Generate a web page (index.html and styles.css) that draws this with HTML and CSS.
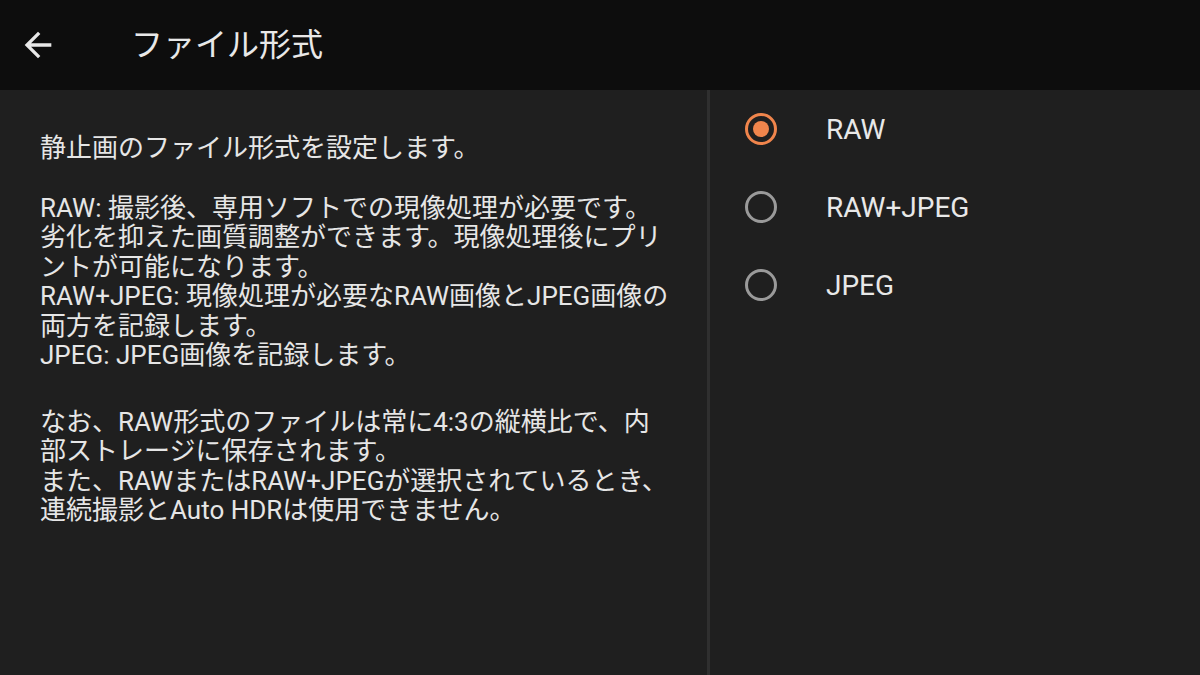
FILE: index.html
```html
<!DOCTYPE html>
<html lang="ja">
<head>
<meta charset="utf-8">
<link rel="stylesheet" href="styles.css">
</head>
<body>
<div class="app">
  <header class="topbar">
    <span class="back">
      <svg viewBox="0 0 24 24" width="40" height="40"><path d="M20 11H7.83l5.59-5.59L12 4l-8 8 8 8 1.41-1.41L7.83 13H20v-2z" fill="#e8e8e8"/></svg>
    </span>
    <h1 class="title">ファイル形式</h1>
  </header>
  <main class="content">
    <section class="desc">
      <p class="para intro">静止画のファイル形式を設定します。</p>
      <p class="para formats">RAW: 撮影後、専用ソフトでの現像処理が必要です。<br>劣化を抑えた画質調整ができます。現像処理後にプリ<br>ントが可能になります。<br>RAW+JPEG: 現像処理が必要なRAW画像とJPEG画像の<br>両方を記録します。<br>JPEG: JPEG画像を記録します。</p>
      <p class="para note">なお、RAW形式のファイルは常に4:3の縦横比で、内<br>部ストレージに保存されます。<br>また、RAWまたはRAW+JPEGが選択されているとき、<br>連続撮影とAuto HDRは使用できません。</p>
    </section>
    <section class="options">
      <div class="option"><span class="radio checked"></span><span class="label">RAW</span></div>
      <div class="option"><span class="radio"></span><span class="label">RAW+JPEG</span></div>
      <div class="option"><span class="radio"></span><span class="label">JPEG</span></div>
    </section>
  </main>
</div>
</body>
</html>
```
FILE: styles.css
```css
html, body {
  margin: 0;
  padding: 0;
  background: #1f1f1f;
}
body {
  font-family: Roboto, "Noto Sans CJK JP", sans-serif;
  color: #e6e6e6;
}
.app {
  width: 1200px;
  height: 675px;
  display: flex;
  flex-direction: column;
  overflow: hidden;
}
.topbar {
  height: 90px;
  flex: 0 0 90px;
  background: #0d0d0d;
  display: flex;
  align-items: center;
  padding-left: 18px;
  box-sizing: border-box;
}
.back {
  width: 40px;
  height: 40px;
  display: flex;
}
.title {
  margin: 0 0 0 73px;
  font-weight: 400;
  font-size: 32px;
  color: #e8e8e8;
  line-height: 1;
}
.content {
  flex: 1;
  display: flex;
}
.desc {
  width: 710px;
  flex: 0 0 710px;
  box-sizing: border-box;
  padding: 44px 0 0 40px;
  border-right: 3px solid #2f2f2f;
}
.para {
  margin: 0;
  font-size: 26px;
  line-height: 29.5px;
  white-space: nowrap;
}
.intro {
  margin-bottom: 30px;
}
.formats {
  margin-bottom: 37px;
}
.options {
  flex: 1;
  display: flex;
  flex-direction: column;
  padding-left: 35px;
}
.option {
  height: 78px;
  display: flex;
  align-items: center;
}
.radio {
  width: 32px;
  height: 32px;
  box-sizing: border-box;
  border: 3px solid #9a9a9a;
  border-radius: 50%;
  display: flex;
  align-items: center;
  justify-content: center;
}
.radio.checked {
  border-color: #f0854c;
}
.radio.checked::after {
  content: "";
  width: 16px;
  height: 16px;
  border-radius: 50%;
  background: #f0854c;
}
.label {
  margin-left: 49px;
  font-size: 28px;
  color: #e8e8e8;
}
```
